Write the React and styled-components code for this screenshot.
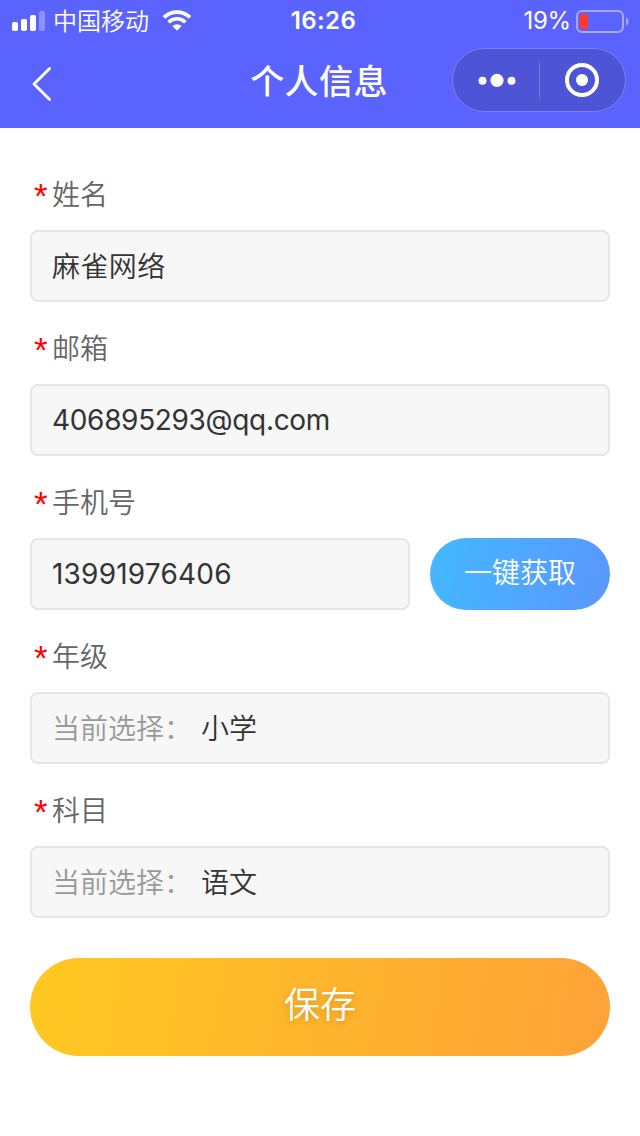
import React from 'react';
import styled, { createGlobalStyle } from 'styled-components';

const GlobalStyle = createGlobalStyle`
  * { box-sizing: border-box; }
  body {
    margin: 0;
    background: #fff;
    font-family: Inter, "Noto Sans CJK SC", sans-serif;
  }
  button, input { font: inherit; }
`;

const Page = styled.div`
  width: 640px;
  height: 1136px;
  overflow: hidden;
  background: #fff;
`;

const Header = styled.header`
  height: 128px;
  background: #5b63fe;
  color: #fff;
`;

const StatusBar = styled.div`
  display: grid;
  grid-template-columns: 1fr auto 1fr;
  align-items: center;
  height: 40px;
  padding: 0 11px 0 12px;
  line-height: 40px;
`;

const StatusGroup = styled.div`
  display: flex;
  align-items: center;
  justify-content: ${(p) => (p.$end ? 'flex-end' : 'flex-start')};
  height: 40px;
`;

const Carrier = styled.span`
  margin: 0 13px 0 8px;
  padding-top: 2px;
  font-size: 24px;
  font-weight: 350;
`;

const Clock = styled.span`
  font-size: 24px;
  font-weight: 600;
  letter-spacing: 0.4px;
  padding: 1px 0 0 6px;
`;

const Percent = styled.span`
  margin-right: 5px;
  padding-top: 1px;
  font-size: 24px;
  letter-spacing: -0.2px;
`;

const NavBar = styled.div`
  display: grid;
  grid-template-columns: 1fr auto 1fr;
  align-items: center;
  height: 80px;
  padding: 0 14px 0 30px;
`;

const BackButton = styled.button`
  display: flex;
  width: 24px;
  height: 40px;
  margin-top: 8px;
  padding: 0;
  border: 0;
  background: none;
`;

const Title = styled.h1`
  margin: 0 18px 0 0;
  padding-top: 3px;
  font-size: 34px;
  font-weight: 500;
  line-height: 77px;
  letter-spacing: 0.4px;
`;

const Capsule = styled.div`
  display: flex;
  align-items: center;
  justify-self: end;
  width: 174px;
  height: 64px;
  border: 1px solid #7b80ea;
  border-radius: 32px;
  background: #4d54d5;
`;

const CapsuleHalf = styled.div`
  display: flex;
  flex: 1;
  align-items: center;
  justify-content: center;
`;

const Divider = styled.i`
  width: 1px;
  height: 37px;
  background: #7479e2;
`;

const Form = styled.form`
  padding: 30px 30px 0;
`;

const Field = styled.div`
  margin-bottom: 10px;
`;

const Label = styled.label`
  display: flex;
  height: 72px;
  padding: 1px 0 0 4px;
  color: #666;
  font-size: 28px;
  font-weight: 350;
  line-height: 72px;
`;

const Star = styled.span`
  width: 18px;
  color: #f00;
  font-family: "Liberation Sans", sans-serif;
  font-size: 35px;
  font-weight: 400;
  line-height: 74px;
`;

const Row = styled.div`
  display: flex;
  gap: 20px;
`;

const Box = styled.div`
  display: flex;
  flex: 1;
  align-items: center;
  height: 72px;
  padding: ${(p) => (p.$latin ? '0 20px' : '0 20px 2px')};
  border: 2px solid #e6e6e6;
  border-radius: 8px;
  background: #f7f7f7;
  color: #333;
  font-size: 28px;
  font-weight: ${(p) => (p.$latin ? 400 : 350)};
  letter-spacing: ${(p) => p.$spacing || '0'};
`;

const Hint = styled.span`
  width: 149px;
  color: #999;
  font-weight: 350;
`;

const FetchButton = styled.button`
  width: 180px;
  height: 72px;
  padding: 0 0 6px;
  border: 0;
  border-radius: 36px;
  background: linear-gradient(100deg, #43b9ff, #5a96ff);
  color: #fff;
  font-size: 28px;
  font-weight: 350;
`;

const SaveButton = styled.button`
  display: block;
  width: 100%;
  height: 98px;
  margin-top: 40px;
  padding: 0 0 11px;
  border: 0;
  border-radius: 49px;
  background: linear-gradient(100deg, #ffc821, #fda238);
  color: #fff;
  font-size: 36px;
  font-weight: 350;
  text-shadow: 0 2px 6px rgba(120, 80, 0, 0.3);
`;

const SignalIcon = () => (
  <svg width="33" height="22" viewBox="0 0 33 22" fill="#fff">
    <rect x="0" y="12" width="6" height="9" rx="1.8" />
    <rect x="9" y="9" width="6" height="12" rx="1.8" />
    <rect x="18" y="5" width="6" height="16" rx="1.8" />
    <rect x="27" y="1" width="6" height="20" rx="1.8" opacity=".3" />
  </svg>
);

const WifiIcon = () => (
  <svg width="30" height="22" viewBox="0 0 30 22" fill="none" stroke="#fff" strokeWidth="3.7">
    <path d="M2 7.4a18.6 18.6 0 0 1 26 0" />
    <path d="M6.6 12.2a12 12 0 0 1 16.8 0" />
    <path d="M15 20.8l-4.6-4.7a6.6 6.6 0 0 1 9.2 0z" fill="#fff" stroke="none" />
  </svg>
);

const BatteryIcon = () => (
  <svg width="53" height="24" viewBox="0 0 53 24">
    <rect x="1" y="2" width="46" height="21" rx="5" fill="none" stroke="#a6aaff" strokeWidth="2" />
    <path d="M12 5v15H6a2.5 2.5 0 0 1-2.5-2.5v-10A2.5 2.5 0 0 1 6 5z" fill="#ff3b30" />
    <path d="M50 8.5c3.5 1 3.5 7 0 8z" fill="#a6aaff" />
  </svg>
);

const BackIcon = () => (
  <svg width="24" height="40" viewBox="0 0 24 40" fill="none" stroke="#fff" strokeWidth="2.8">
    <path d="M19.6 4.4L4 20L19.6 35.6" strokeLinecap="round" strokeLinejoin="round" />
  </svg>
);

const MoreIcon = () => (
  <svg width="41" height="16" viewBox="0 0 41 16" fill="#fff">
    <circle cx="7.5" cy="8.8" r="4" />
    <circle cx="22" cy="8.4" r="6.6" />
    <circle cx="36.5" cy="8.8" r="4" />
  </svg>
);

const TargetIcon = () => (
  <svg width="34" height="34" viewBox="0 0 34 34">
    <circle cx="17" cy="17" r="15" fill="none" stroke="#fff" strokeWidth="4" />
    <circle cx="17" cy="17" r="6" fill="#fff" />
  </svg>
);

const FormField = ({ label, children }) => (
  <Field>
    <Label><Star>*</Star>{label}</Label>
    <Row>{children}</Row>
  </Field>
);

export default function App() {
  return (
    <Page>
      <GlobalStyle />
      <Header>
        <StatusBar>
          <StatusGroup>
            <SignalIcon />
            <Carrier>中国移动</Carrier>
            <WifiIcon />
          </StatusGroup>
          <Clock>16:26</Clock>
          <StatusGroup $end>
            <Percent>19%</Percent>
            <BatteryIcon />
          </StatusGroup>
        </StatusBar>
        <NavBar>
          <BackButton type="button" aria-label="返回"><BackIcon /></BackButton>
          <Title>个人信息</Title>
          <Capsule>
            <CapsuleHalf><MoreIcon /></CapsuleHalf>
            <Divider />
            <CapsuleHalf><TargetIcon /></CapsuleHalf>
          </Capsule>
        </NavBar>
      </Header>
      <Form>
        <FormField label="姓名"><Box $spacing="0.4px">麻雀网络</Box></FormField>
        <FormField label="邮箱"><Box $latin $spacing="-0.33px">406895293@qq.com</Box></FormField>
        <FormField label="手机号">
          <Box $latin $spacing="0.2px">13991976406</Box>
          <FetchButton type="button">一键获取</FetchButton>
        </FormField>
        <FormField label="年级"><Box><Hint>当前选择：</Hint>小学</Box></FormField>
        <FormField label="科目"><Box><Hint>当前选择：</Hint>语文</Box></FormField>
        <SaveButton type="button">保存</SaveButton>
      </Form>
    </Page>
  );
}
